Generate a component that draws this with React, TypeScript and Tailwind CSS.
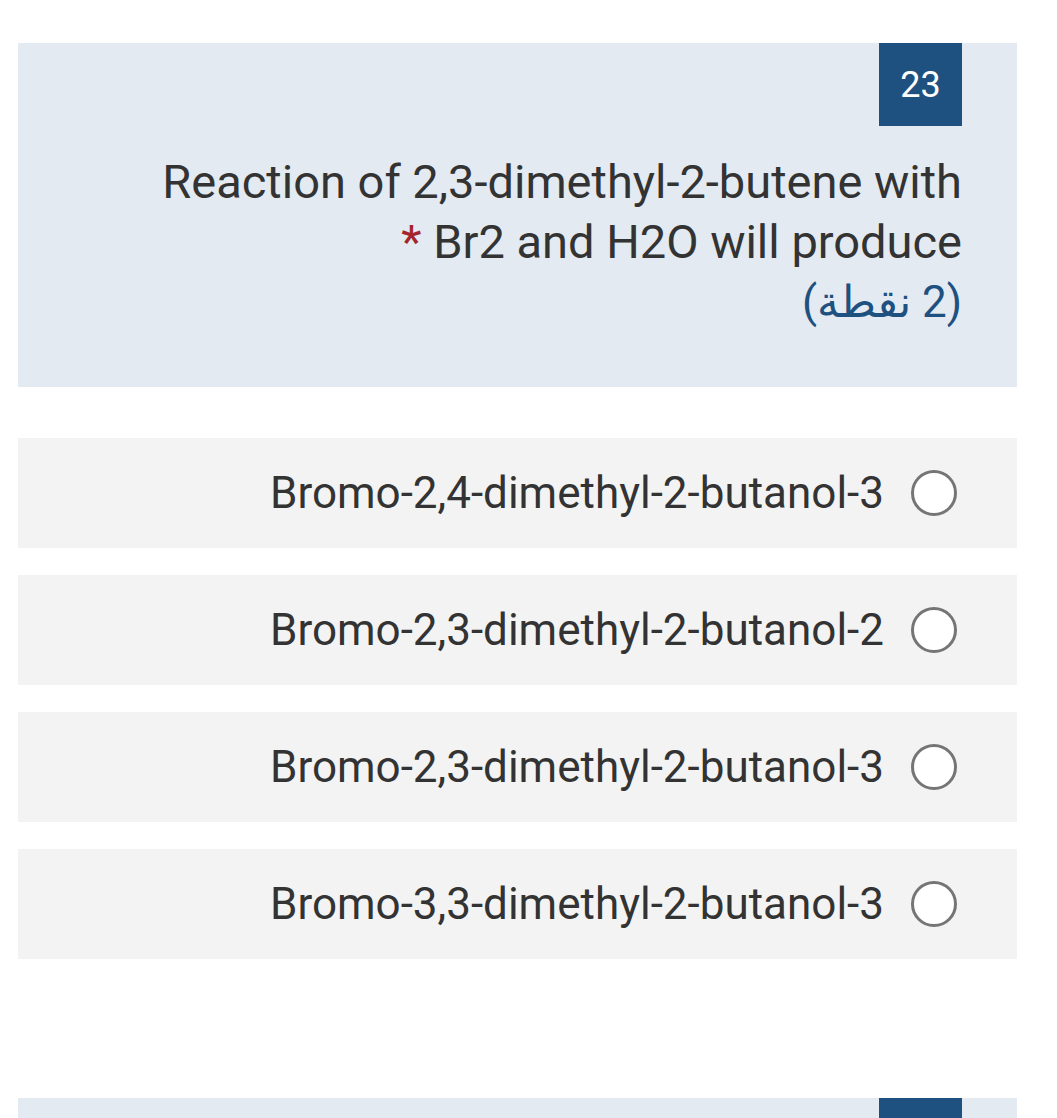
import React from "react";

const options = [
  "Bromo-2,4-dimethyl-2-butanol-3",
  "Bromo-2,3-dimethyl-2-butanol-2",
  "Bromo-2,3-dimethyl-2-butanol-3",
  "Bromo-3,3-dimethyl-2-butanol-3",
];

export default function App() {
  return (
    <div
      className="w-[1057px] h-[1118px] bg-white overflow-hidden pt-[43px] px-[18px] pr-[40px]"
      style={{ fontFamily: "Roboto, 'Noto Sans', sans-serif" }}
    >
      <div className="bg-[#e3eaf1] h-[344px] flex flex-col items-end pr-[55px]">
        <div className="w-[83px] h-[83px] bg-[#1f5180] text-white flex items-center justify-center text-[36px]">
          23
        </div>
        <div className="mt-[26px] text-right text-[47px] leading-[60px] text-[#333333] whitespace-nowrap">
          <div>Reaction of 2,3-dimethyl-2-butene with</div>
          <div>
            <span className="text-[#a4262c]">*</span> Br2 and H2O will produce
          </div>
          <div className="text-[#1f5180] text-[44px]" dir="rtl">
            (2 نقطة)
          </div>
        </div>
      </div>
      <div className="mt-[51px] flex flex-col gap-[27px]">
        {options.map((o) => (
          <div key={o} className="bg-[#f3f3f3] h-[110px] flex items-center justify-end pr-[60px]">
            <span className="text-[44px] text-[#333333] whitespace-nowrap">{o}</span>
            <span className="ml-[27px] w-[46px] h-[46px] shrink-0 rounded-full border-[3px] border-[#757575] bg-white" />
          </div>
        ))}
      </div>
      <div className="mt-[139px] bg-[#e3eaf1] h-[40px] flex justify-end pr-[55px]">
        <div className="w-[83px] h-[40px] bg-[#1f5180]" />
      </div>
    </div>
  );
}
